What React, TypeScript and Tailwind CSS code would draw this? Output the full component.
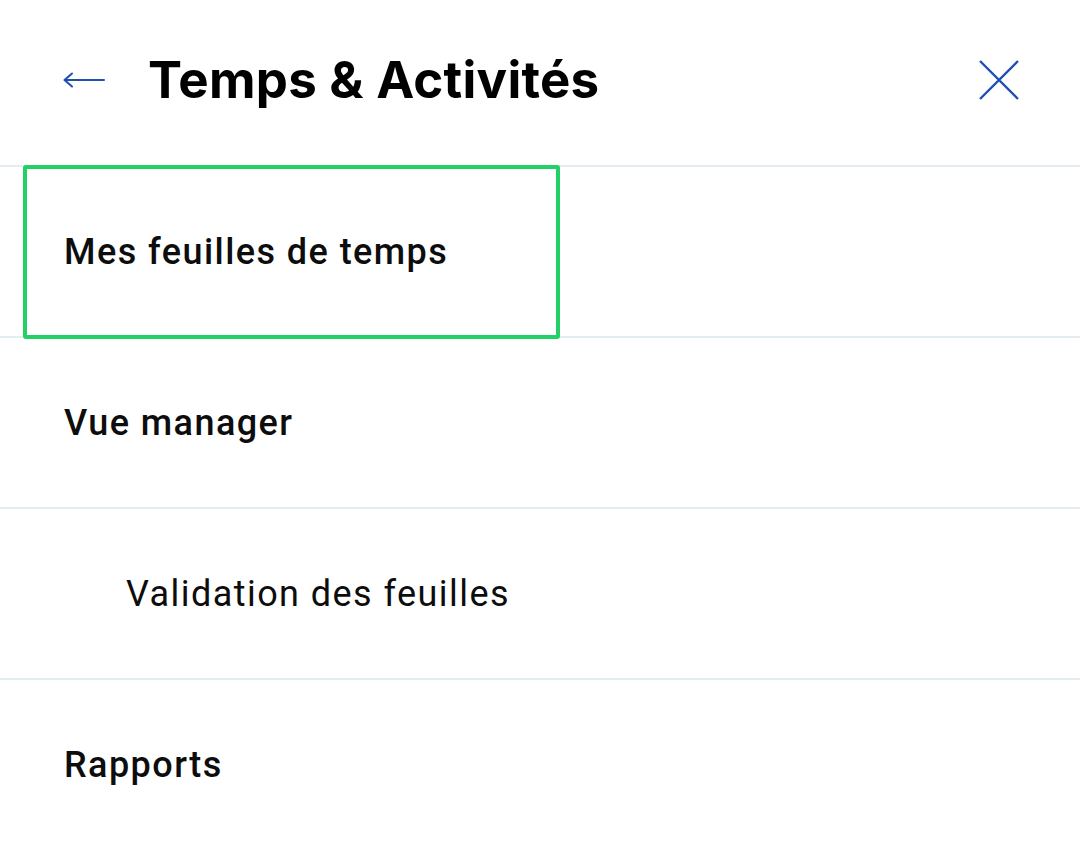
const rows = [
  { label: 'Mes feuilles de temps', bold: true, indent: false, focused: true },
  { label: 'Vue manager', bold: true, indent: false, focused: false },
  { label: 'Validation des feuilles', bold: false, indent: true, focused: false },
  { label: 'Rapports', bold: true, indent: false, focused: false },
];

export default function App() {
  return (
    <div className="h-[867px] w-[1080px] overflow-hidden bg-white">
      {/* Header */}
      <div className="flex h-[165px] items-center pl-[63px] pr-[61px] pb-[6px]">
        <svg width="42" height="20" viewBox="0 0 42 20" fill="none" className="shrink-0">
          <path d="M1.5 10H41M1.5 10L9 3.5M1.5 10L9 16.5" stroke="#1f4fb2" strokeWidth="2" strokeLinecap="round" />
        </svg>
        <h1
          className="ml-[43px] flex-1 text-[51px] font-bold leading-none tracking-[0.005em] text-black"
          style={{ fontFamily: 'Inter, Lato, sans-serif' }}
        >
          Temps &amp; Activités
        </h1>
        <svg width="40" height="40" viewBox="0 0 40 40" fill="none" className="shrink-0">
          <path d="M1 1L39 39M39 1L1 39" stroke="#1f4fb2" strokeWidth="2.4" />
        </svg>
      </div>

      {/* Menu list */}
      <div style={{ fontFamily: 'Roboto, "Liberation Sans", sans-serif' }}>
        {rows.map(r => (
          <div key={r.label} className="relative flex h-[171px] items-center border-t-2 border-[#e3edf2]">
            <span
              className={`text-[36px] leading-none tracking-[0.04em] text-[#0d0d0d] ${r.bold ? 'font-medium' : 'font-normal'} ${r.indent ? 'pl-[126px]' : 'pl-[64px]'}`}
            >
              {r.label}
            </span>
            {r.focused && (
              <div className="absolute left-[23px] top-[-2px] z-10 h-[174px] w-[537px] rounded-[3px] outline-4 -outline-offset-4 outline-solid outline-[#22d066]" />
            )}
          </div>
        ))}
      </div>
    </div>
  );
}
